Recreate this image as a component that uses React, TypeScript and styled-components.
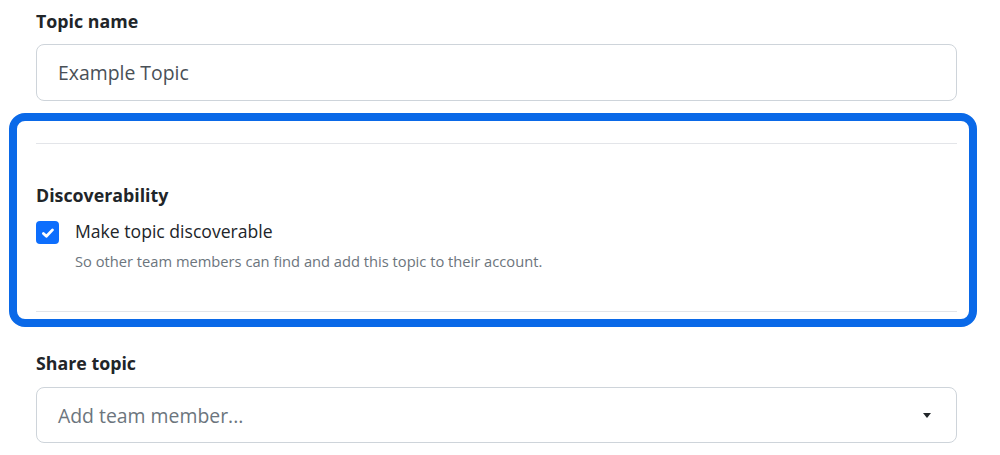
import React from 'react';
import styled, {createGlobalStyle} from 'styled-components';

const GlobalStyle = createGlobalStyle`
  html, body {
    margin: 0;
    padding: 0;
    background: #ffffff;
  }
  body {
    font-family: "Open Sans", "Noto Sans", sans-serif;
    color: #212529;
  }
`;

export default function App() {
  return (
    <>
      <GlobalStyle />
      <Page>
        <Field>
          <Label>Topic name</Label>
          <TextInput defaultValue="Example Topic" />
        </Field>

        <Highlight>
          <Divider />
          <Heading>Discoverability</Heading>
          <CheckRow>
            <CheckBox>
              <svg width="16" height="16" viewBox="0 0 16 16" fill="none">
                <path
                  d="M3.4 8.4l3 2.9 6.1-6.4"
                  stroke="#ffffff"
                  strokeWidth="2.8"
                  strokeLinecap="round"
                  strokeLinejoin="round"
                />
              </svg>
            </CheckBox>
            <CheckLabel>Make topic discoverable</CheckLabel>
          </CheckRow>
          <Help>So other team members can find and add this topic to their account.</Help>
          <Divider $bottom />
        </Highlight>

        <Field $share>
          <Label>Share topic</Label>
          <Select>
            <Placeholder>Add team member...</Placeholder>
            <Caret />
          </Select>
        </Field>
      </Page>
    </>
  );
}

const Page = styled.div`
  width: 1000px;
  height: 455px;
  box-sizing: border-box;
  padding: 9px 43px 0 36px;
  overflow: hidden;
`;

const Field = styled.div<{$share?: boolean}>`
  display: flex;
  flex-direction: column;
  gap: ${(p) => (p.$share ? '12px' : '11px')};
  margin-top: ${(p) => (p.$share ? '24px' : '0')};
`;

const Label = styled.div`
  font-weight: 700;
  font-size: 17.8px;
  line-height: 24px;
  height: 24px;
  color: #212529;
`;

const TextInput = styled.input`
  box-sizing: border-box;
  width: 921px;
  height: 57px;
  padding: 0 21px;
  border: 1px solid #ced4da;
  border-radius: 8px;
  font-family: inherit;
  font-size: 19.4px;
  color: #495057;
  outline: none;
  background: #fff;
`;

const Highlight = styled.section`
  margin: 12px 0 0 -27px;
  width: 968px;
  box-sizing: border-box;
  border: 8px solid #0a69e8;
  border-radius: 16px;
  padding: 22px 12px 7px 19px;
`;

const Divider = styled.div<{$bottom?: boolean}>`
  height: 1px;
  background: #e3e5e9;
  margin-top: ${(p) => (p.$bottom ? '40px' : '0')};
`;

const Heading = styled.div`
  margin-top: 39px;
  font-weight: 700;
  font-size: 17.8px;
  line-height: 24px;
  color: #212529;
`;

const CheckRow = styled.div`
  display: flex;
  align-items: center;
  gap: 16px;
  margin-top: 14px;
  height: 23px;
`;

const CheckBox = styled.div`
  width: 23px;
  height: 23px;
  border-radius: 4px;
  background: #0d6efd;
  display: flex;
  align-items: center;
  justify-content: center;
  flex-shrink: 0;
`;

const CheckLabel = styled.span`
  font-size: 17.6px;
  line-height: 24px;
  margin-bottom: 3px;
  color: #212529;
`;

const Help = styled.div`
  margin: 7px 0 0 39px;
  font-size: 14.7px;
  line-height: 20px;
  color: #6c757d;
`;

const Select = styled.div`
  box-sizing: border-box;
  width: 921px;
  height: 56px;
  padding: 0 25px 0 21px;
  border: 1px solid #ced4da;
  border-radius: 8px;
  display: flex;
  align-items: center;
  justify-content: space-between;
`;

const Placeholder = styled.span`
  font-size: 19.4px;
  color: #6c757d;
`;

const Caret = styled.span`
  width: 0;
  height: 0;
  border-left: 4px solid transparent;
  border-right: 4px solid transparent;
  border-top: 5px solid #212529;
`;
